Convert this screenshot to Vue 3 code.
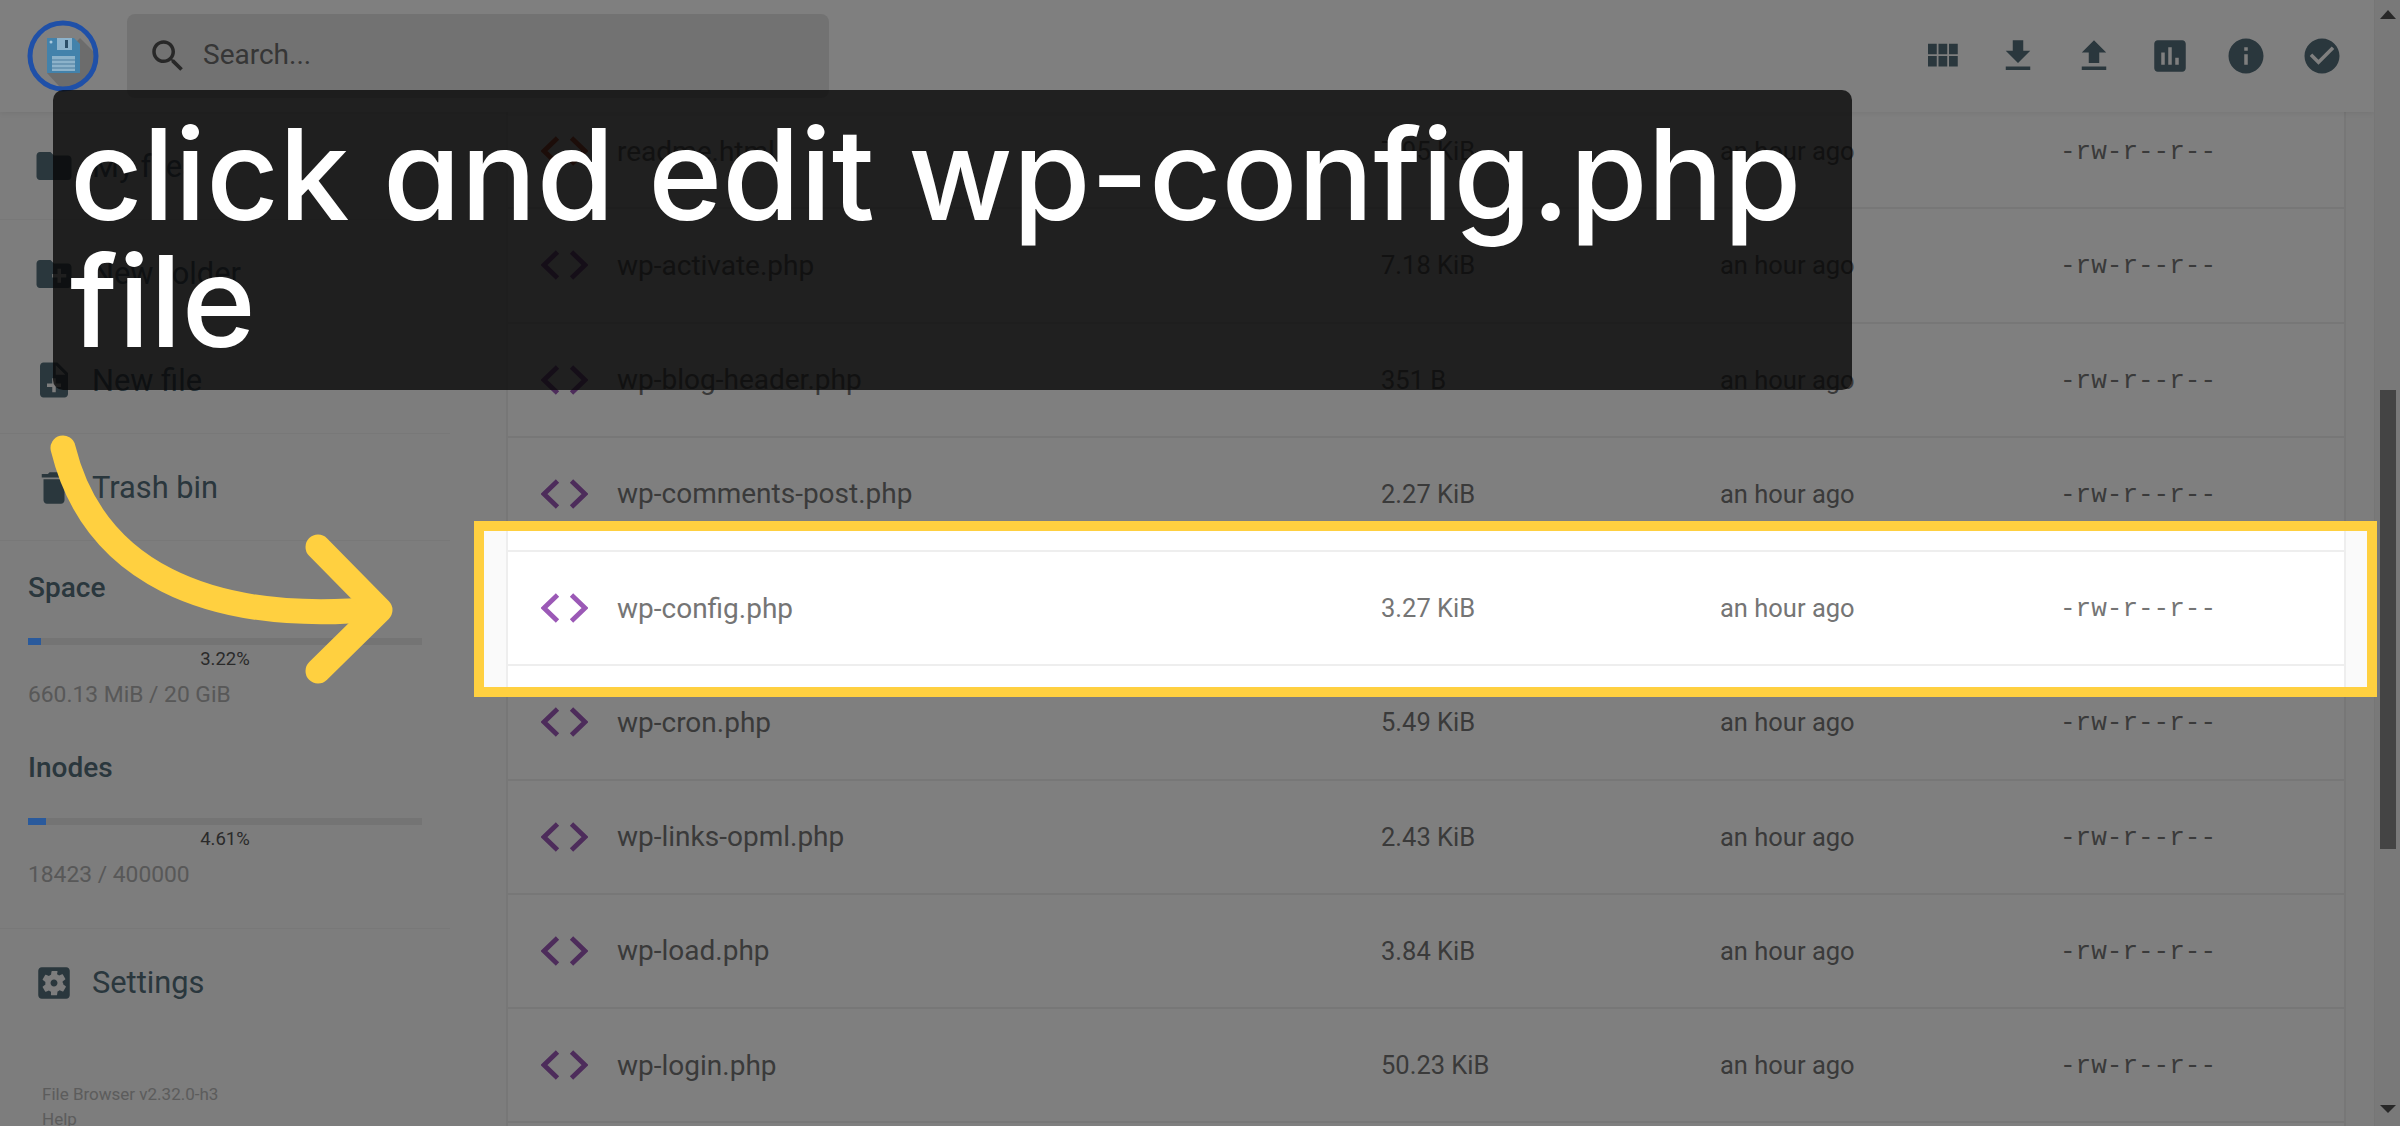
<script setup>
const icons = {
  grid: 'M4 11h5V5H4v6zm0 7h5v-6H4v6zm6 0h5v-6h-5v6zm6 0h5v-6h-5v6zm-6-7h5V5h-5v6zm6-6v6h5V5h-5z',
  download: 'M19 9h-4V3H9v6H5l7 7 7-7zM5 18v2h14v-2H5z',
  upload: 'M9 16h6v-6h4l-7-7-7 7h4v6zm-4 2h14v2H5v-2z',
  chart: 'M19 3H5c-1.1 0-2 .9-2 2v14c0 1.1.9 2 2 2h14c1.1 0 2-.9 2-2V5c0-1.1-.9-2-2-2zM9 17H7v-7h2v7zm4 0h-2V7h2v10zm4 0h-2v-4h2v4z',
  info: 'M12 2C6.48 2 2 6.48 2 12s4.48 10 10 10 10-4.48 10-10S17.52 2 12 2zm1 15h-2v-6h2v6zm0-8h-2V7h2v2z',
  check: 'M12 2C6.48 2 2 6.48 2 12s4.48 10 10 10 10-4.48 10-10S17.52 2 12 2zm-2 15l-5-5 1.41-1.41L10 14.17l7.59-7.59L19 8l-9 9z',
  folder: 'M10 4H4c-1.1 0-1.99.9-1.99 2L2 18c0 1.1.9 2 2 2h16c1.1 0 2-.9 2-2V8c0-1.1-.9-2-2-2h-8l-2-2z',
  newFolder: 'M20 6h-8l-2-2H4c-1.11 0-1.99.89-1.99 2L2 18c0 1.11.89 2 2 2h16c1.11 0 2-.89 2-2V8c0-1.11-.89-2-2-2zm-1 8h-3v3h-2v-3h-3v-2h3V9h2v3h3v2z',
  newFile: 'M14 2H6c-1.1 0-1.99.9-1.99 2L4 20c0 1.1.89 2 1.99 2H18c1.1 0 2-.9 2-2V8l-6-6zm2 14h-3v3h-2v-3H8v-2h3v-3h2v3h3v2zm-3-7V3.5L18.5 9H13z',
  trash: 'M6 19c0 1.1.9 2 2 2h8c1.1 0 2-.9 2-2V7H6v12zM19 4h-3.5l-1-1h-5l-1 1H5v2h14V4z',
  settings: 'M12 10c-1.1 0-2 .9-2 2s.9 2 2 2 2-.9 2-2-.9-2-2-2zm7-7H5c-1.11 0-2 .9-2 2v14c0 1.1.89 2 2 2h14c1.11 0 2-.9 2-2V5c0-1.1-.89-2-2-2zm-1.75 9c0 .23-.02.46-.05.68l1.48 1.16c.13.11.17.3.08.45l-1.4 2.42c-.09.15-.27.21-.43.15l-1.74-.7c-.36.28-.76.51-1.18.69l-.26 1.85c-.03.17-.18.3-.35.3h-2.8c-.17 0-.32-.13-.35-.3L10.3 17c-.42-.18-.82-.41-1.18-.69l-1.74.7c-.16.06-.34 0-.43-.15l-1.4-2.42c-.09-.15-.05-.34.08-.45l1.48-1.16c-.03-.23-.05-.46-.05-.69 0-.23.02-.46.05-.68l-1.48-1.16c-.13-.11-.17-.3-.08-.45l1.4-2.42c.09-.15.27-.21.43-.15l1.74.7c.36-.28.76-.51 1.18-.69l.26-1.85c.03-.17.18-.3.35-.3h2.8c.17 0 .32.13.35.3L13.7 7c.42.18.82.41 1.18.69l1.74-.7c.16-.06.34 0 .43.15l1.4 2.42c.09.15.05.34-.08.45l-1.48 1.16c.03.23.05.46.05.68z',
  search: 'M15.5 14h-.79l-.28-.27C15.41 12.59 16 11.11 16 9.5 16 5.91 13.09 3 9.5 3S3 5.91 3 9.5 5.91 16 9.5 16c1.61 0 3.09-.59 4.23-1.57l.27.28v.79l5 4.99L20.49 19l-4.99-5zm-6 0C7.01 14 5 11.99 5 9.5S7.01 5 9.5 5 14 7.01 14 9.5 11.99 14 9.5 14z'
}
const actions = ['grid', 'download', 'upload', 'chart', 'info', 'check']
const groups = [
  [{ icon: 'folder', label: 'My files' }],
  [{ icon: 'newFolder', label: 'New folder' }, { icon: 'newFile', label: 'New file' }],
  [{ icon: 'trash', label: 'Trash bin' }]
]
const usage = [
  { title: 'Space', pct: 3.22, value: '660.13 MiB / 20 GiB' },
  { title: 'Inodes', pct: 4.61, value: '18423 / 400000' }
]
const files = [
  ['readme.html', '7.95 KiB', true],
  ['wp-activate.php', '7.18 KiB'],
  ['wp-blog-header.php', '351 B'],
  ['wp-comments-post.php', '2.27 KiB'],
  ['wp-config.php', '3.27 KiB'],
  ['wp-cron.php', '5.49 KiB'],
  ['wp-links-opml.php', '2.43 KiB'],
  ['wp-load.php', '3.84 KiB'],
  ['wp-login.php', '50.23 KiB']
]
</script>

<template>
  <div class="page">
    <header class="topbar">
      <svg class="logo" width="76" height="76" viewBox="0 0 76 76">
        <defs><clipPath id="disc"><circle cx="38" cy="38" r="33" /></clipPath></defs>
        <circle cx="38" cy="38" r="33" fill="#808080" />
        <polygon clip-path="url(#disc)" points="55,20 80,45 80,80 45,80 22,55" fill="#6c6c6c" />
        <path d="M22 20h27l6 6v29H22z" fill="#4382ab" />
        <rect x="32" y="20" width="15" height="12" fill="#8db3cc" />
        <rect x="40" y="22" width="3" height="8" fill="#2c4f68" />
        <circle cx="26" cy="24" r="1.5" fill="#a9c8dc" />
        <rect x="27" y="38" width="23" height="15" fill="#8cb2ca" />
        <path d="M27 42h23M27 46h23M27 50h23" stroke="#4c7d9e" stroke-width="1.2" />
        <circle cx="38" cy="38" r="33" fill="none" stroke="#1f50a8" stroke-width="5" />
      </svg>
      <div class="search">
        <svg width="42" height="42" viewBox="0 0 24 24"><path :d="icons.search" fill="#505050" /></svg>
        <span>Search...</span>
      </div>
      <div class="actions">
        <svg v-for="a in actions" :key="a" width="42" height="42" viewBox="0 0 24 24"><path :d="icons[a]" fill="#546e7a" /></svg>
      </div>
    </header>

    <aside class="sidebar">
      <div v-for="(g, i) in groups" :key="i" class="group">
        <div v-for="item in g" :key="item.label" class="item">
          <svg width="42" height="42" viewBox="0 0 24 24"><path :d="icons[item.icon]" fill="#546e7a" /></svg>
          <span>{{ item.label }}</span>
        </div>
      </div>
      <div class="usage">
        <div v-for="u in usage" :key="u.title" class="meter">
          <div class="meter-title">{{ u.title }}</div>
          <div class="track"><div class="fill" :style="{ width: u.pct + '%' }"></div></div>
          <div class="pct">{{ u.pct }}%</div>
          <div class="value">{{ u.value }}</div>
        </div>
      </div>
      <div class="item">
        <svg width="42" height="42" viewBox="0 0 24 24"><path :d="icons.settings" fill="#546e7a" /></svg>
        <span>Settings</span>
      </div>
      <div class="foot">
        <div>File Browser v2.32.0-h3</div>
        <div>Help</div>
      </div>
    </aside>

    <main class="list">
      <div v-for="f in files" :key="f[0]" class="row">
        <div class="name">
          <svg width="47" height="30" viewBox="0 0 47 30" fill="none" :stroke="f[2] ? '#d9502a' : '#9b59b6'" stroke-width="4.8">
            <path d="M16.5 2 3 15l13.5 13M30.500 2 44 15 30.500 28" />
          </svg>
          <span>{{ f[0] }}</span>
        </div>
        <div>{{ f[1] }}</div>
        <div>an hour ago</div>
        <div class="perm">-rw-r--r--</div>
      </div>
    </main>

    <div class="scrollbar">
      <i class="arrow up"></i>
      <div class="thumb"></div>
      <i class="arrow down"></i>
    </div>

    <div class="spot"></div>

    <svg class="pointer" width="400" height="280" viewBox="0 420 400 280" fill="none" stroke="#ffd040" stroke-width="25" stroke-linecap="round" stroke-linejoin="round">
      <path d="M63 448C93 570 205 625 378 609" />
      <path d="M318 547 380 610 318 671" />
    </svg>

    <div class="caption">click and edit wp-config.php file</div>
  </div>
</template>

<style>
html, body { margin: 0; overflow: hidden; }
</style>

<style scoped>
.page {
  position: relative;
  width: 2400px;
  height: 1126px;
  overflow: hidden;
  display: flex;
  background: #fafafa;
  font-family: Roboto, "Liberation Sans", sans-serif;
}
.topbar {
  position: absolute;
  left: 0;
  top: 0;
  width: 2374px;
  height: 112px;
  box-sizing: border-box;
  display: flex;
  align-items: center;
  background: #fff;
  box-shadow: 0 1px 6px rgba(0, 0, 0, .08);
  padding-left: 25px;
}
.logo {
  position: relative;
  z-index: 11;
  flex: none;
}
.search {
  display: flex;
  align-items: center;
  gap: 14px;
  width: 702px;
  height: 84px;
  box-sizing: border-box;
  margin-left: 26px;
  padding-left: 20px;
  background: #e4e4e4;
  border-radius: 8px;
  color: #6c6c6c;
  font-size: 28px;
}
.search span { padding-bottom: 3px; }
.actions {
  display: flex;
  gap: 34px;
  margin-left: auto;
  padding-right: 31px;
}
.sidebar {
  flex: none;
  width: 506px;
  height: 1126px;
  box-sizing: border-box;
  padding-top: 112px;
  overflow: hidden;
}
.group {
  width: 450px;
  border-bottom: 1.5px solid #f0f0f0;
}
.item {
  display: flex;
  align-items: center;
  gap: 17px;
  height: 106.5px;
  box-sizing: border-box;
  padding: 1.5px 0 0 33px;
  color: #546e7a;
  font-size: 30.8px;
}
.usage {
  width: 450px;
  box-sizing: border-box;
  padding: 31.5px 0 38px 28px;
  border-bottom: 1.5px solid #f0f0f0;
}
.meter + .meter { margin-top: 43px; }
.meter-title {
  color: #546e7a;
  font-weight: 500;
  font-size: 28px;
  line-height: 30px;
}
.track {
  width: 394px;
  height: 7px;
  margin-top: 35px;
  background: #e8e8e8;
}
.fill {
  position: relative;
  z-index: 11;
  height: 100%;
  background: #2a5a9c;
}
.pct {
  width: 394px;
  margin-top: 3px;
  text-align: center;
  font-size: 18.500px;
  line-height: 22px;
  color: #555;
}
.value {
  margin-top: 10px;
  font-size: 22.8px;
  line-height: 30px;
  color: #b0b0b0;
}
.foot {
  margin-top: 47px;
  padding-left: 42px;
  font-size: 17px;
  line-height: 25px;
  color: #b8b8b8;
}
.list {
  flex: none;
  width: 1840px;
  height: 1126px;
  margin-right: 28px;
  box-sizing: border-box;
  overflow: hidden;
  padding-top: 95px;
  background: #fff;
  border-left: 2px solid #eee;
  border-right: 2px solid #eee;
}
.row {
  display: grid;
  grid-template-columns: 873px 339px 340px 1fr;
  align-items: center;
  height: 114.25px;
  box-sizing: border-box;
  border-bottom: 2px solid #eee;
  font-size: 25.500px;
  color: #757575;
}
.name {
  display: flex;
  align-items: center;
  gap: 29px;
  padding-left: 33px;
  font-size: 28px;
}
.perm {
  padding-top: 2px;
  font-family: "Liberation Mono", monospace;
  font-size: 26px;
}
.scrollbar {
  flex: none;
  position: relative;
  width: 26px;
  height: 1126px;
  background: #f3f3f3;
  border-left: 1px solid #ececec;
  box-sizing: border-box;
  display: flex;
  flex-direction: column;
  align-items: center;
}
.arrow {
  width: 0;
  height: 0;
  border-left: 8px solid transparent;
  border-right: 8px solid transparent;
}
.arrow.up {
  margin-top: 10px;
  border-bottom: 9px solid #505050;
}
.thumb {
  width: 16px;
  height: 459px;
  margin-top: 371px;
  background: #888;
}
.arrow.down {
  margin-top: auto;
  margin-bottom: 13px;
  border-top: 8px solid #505050;
}
.spot {
  position: absolute;
  z-index: 10;
  left: 474px;
  top: 521px;
  width: 1903px;
  height: 176px;
  box-sizing: border-box;
  border: 10px solid #ffd040;
  box-shadow: 0 0 0 3000px rgba(0, 0, 0, .5);
}
.pointer {
  position: absolute;
  z-index: 12;
  left: 0;
  top: 420px;
}
.caption {
  position: absolute;
  z-index: 13;
  left: 53px;
  top: 90px;
  width: 1799px;
  height: 300px;
  box-sizing: border-box;
  padding: 21px 17px;
  background: rgba(6, 6, 6, .79);
  border-radius: 10px;
  color: #fff;
  font-family: Inter, "Noto Sans", sans-serif;
  font-feature-settings: "cv11" 1;
  font-weight: 500;
  font-size: 126px;
  line-height: 127px;
}
</style>
